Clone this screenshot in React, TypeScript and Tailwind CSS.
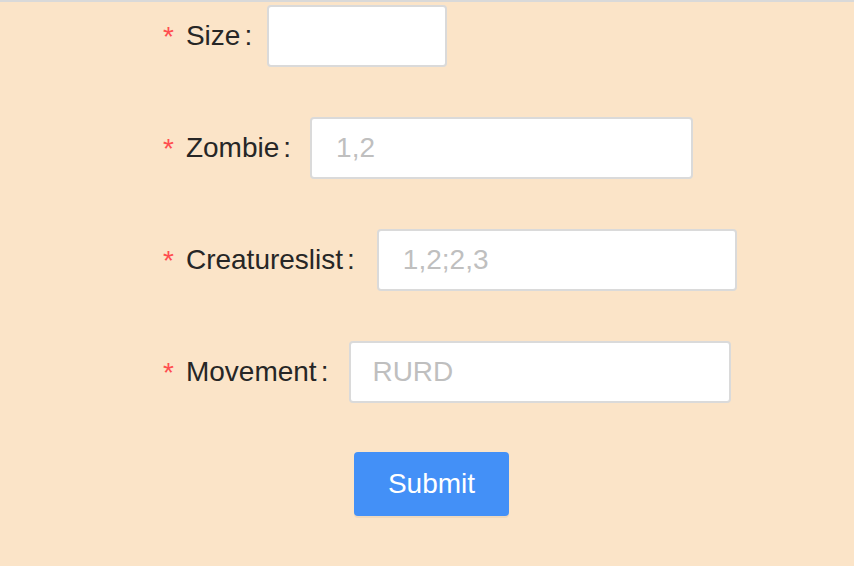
import React from "react";

const rows = [
  { label: "Size", width: 180, placeholder: "", gap: 15, pad: 22 },
  { label: "Zombie", width: 383, placeholder: "1,2", gap: 19, pad: 24 },
  { label: "Creatureslist", width: 360, placeholder: "1,2;2,3", gap: 22, pad: 24 },
  { label: "Movement", width: 382, placeholder: "RURD", gap: 21, pad: 21 },
];

export default function App() {
  return (
    <div
      className="w-[854px] h-[566px] bg-[#fbe4c8] border-t-[2px] border-[#d9d9d9] overflow-hidden"
      style={{ fontFamily: '"Liberation Sans", Arial, sans-serif' }}
    >
      <div className="flex flex-col pl-[163px] pt-[3px] gap-[50px]">
        {rows.map((r) => (
          <div key={r.label} className="flex items-center h-[62px]">
            <span className="text-[28px] leading-none text-[#ff4d4f] mr-[12px] mt-[2px]">*</span>
            <span className="text-[28px] leading-none text-[#262626]">{r.label}</span>
            <span
              className="text-[28px] leading-none text-[#262626] ml-[4px]"
              style={{ marginRight: r.gap }}
            >
              :
            </span>
            <input
              className="h-[62px] bg-white border-2 border-[#dadada] rounded-[4px] text-[28px] text-[#262626] placeholder:text-[#bfbfbf] outline-none"
              style={{ width: r.width, paddingLeft: r.pad, paddingRight: r.pad }}
              placeholder={r.placeholder}
            />
          </div>
        ))}
        <div className="pl-[191px] -mt-[1px]">
          <button className="w-[155px] h-[64px] bg-[#4390f7] text-white text-[28px] rounded-[4px] shadow-[0_2px_0_rgba(0,0,0,0.05)]">
            Submit
          </button>
        </div>
      </div>
    </div>
  );
}
